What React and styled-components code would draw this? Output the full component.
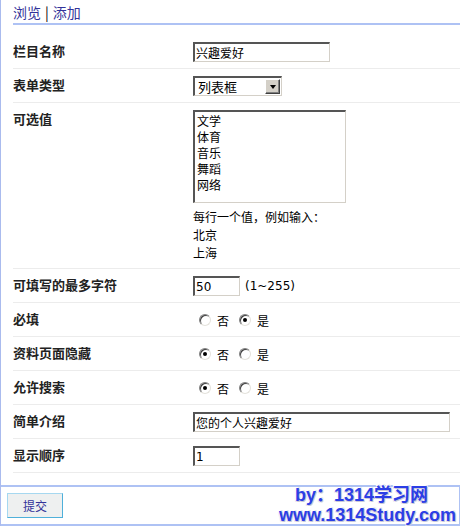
import React from "react";
import styled, { createGlobalStyle, css } from "styled-components";

const Global = createGlobalStyle`
  html, body { margin: 0; padding: 0; background: #fff; }
  body {
    font-family: "Noto Sans CJK SC", "Liberation Sans", sans-serif;
    font-size: 12px;
    color: #000;
  }
`;

const Page = styled.div`
  position: relative;
  width: 460px;
  height: 526px;
  box-sizing: border-box;
  border-left: 1px solid #aabbee;
  display: flex;
  flex-direction: column;
  overflow: hidden;
`;

const Header = styled.div`
  margin-left: 12px;
  height: 23px;
  border-bottom: 2px solid #aec2f4;
  display: flex;
  align-items: center;
  gap: 4px;
  font-size: 14px;
  line-height: 1;
  color: #000;
`;

const NavLink = styled.a`
  color: #333399;
  text-decoration: none;
  cursor: pointer;
`;

const Form = styled.div`
  margin: 10px 0 0 12px;
  display: flex;
  flex-direction: column;
`;

const Row = styled.div`
  display: grid;
  grid-template-columns: 180px 1fr;
  align-items: start;
  box-sizing: border-box;
  min-height: 34px;
  padding: 7px 0 6px;
  border-bottom: 1px solid #ececec;
`;

const Label = styled.div`
  font-weight: 700;
  font-size: 13px;
  line-height: 18px;
  color: #222;
`;

const Field = styled.div`
  display: flex;
  flex-direction: ${(p) => (p.$column ? "column" : "row")};
  align-items: ${(p) => (p.$column ? "flex-start" : "center")};
  min-height: 20px;
  gap: ${(p) => p.$gap || 0}px;
`;

const inset = css`
  box-sizing: border-box;
  border-style: solid;
  border-width: 2px 1px 1px 2px;
  border-color: #555 #d4d0c8 #d4d0c8 #555;
  background: #fff;
`;

const TextInput = styled.input`
  ${inset};
  width: ${(p) => p.$w}px;
  height: 20px;
  padding: 0 1px;
  margin: 0;
  font-family: ${(p) =>
    p.$latin ? `"DejaVu Sans", sans-serif` : `"Noto Sans CJK SC", sans-serif`};
  font-size: 12px;
  color: #000;
  outline: none;
`;

const Select = styled.div`
  ${inset};
  width: 89px;
  height: 20px;
  display: flex;
  align-items: center;
  justify-content: space-between;
  padding: 0 0 0 3px;
  font-size: 13px;
  line-height: 1;
`;

const SelectButton = styled.span`
  width: 15px;
  height: 15px;
  box-sizing: border-box;
  margin-right: 1px;
  background: #d4d0c8;
  border-style: solid;
  border-width: 1px;
  border-color: #fff #404040 #404040 #fff;
  box-shadow: inset -1px -1px 0 #808080;
  display: flex;
  align-items: center;
  justify-content: center;
`;

const Arrow = styled.span`
  width: 0;
  height: 0;
  border-left: 3.5px solid transparent;
  border-right: 3.5px solid transparent;
  border-top: 4px solid #000;
`;

const TextArea = styled.textarea`
  ${inset};
  width: 153px;
  height: 93px;
  margin: 0;
  padding: 1px 2px;
  resize: none;
  overflow: hidden;
  font-family: "Noto Sans CJK SC", sans-serif;
  font-size: 12px;
  line-height: 16px;
  color: #000;
  outline: none;
`;

const Hint = styled.div`
  margin-top: 5px;
  font-size: 12px;
  line-height: 18px;
`;

const Range = styled.span`
  font-family: "DejaVu Sans", sans-serif;
  font-size: 12px;
`;

const RadioGroup = styled.div`
  display: flex;
  align-items: center;
  height: 20px;
  padding-left: 6px;
`;

const RadioItem = styled.label`
  display: flex;
  align-items: center;
  gap: 6px;
  margin-right: 10px;
  font-size: 12px;
`;

const Radio = styled.span`
  position: relative;
  display: inline-block;
  width: 12px;
  height: 12px;
  box-sizing: border-box;
  border-radius: 50%;
  border: 1px solid;
  border-color: #808080 #e4e2dc #e4e2dc #808080;
  box-shadow: inset 1px 1px 0 #404040;
  background: #fff;
  ${(p) =>
    p.$checked &&
    css`
      &::after {
        content: "";
        position: absolute;
        left: 3px;
        top: 3px;
        width: 4px;
        height: 4px;
        border-radius: 50%;
        background: #000;
      }
    `}
`;

const Footer = styled.div`
  margin-top: auto;
  height: 41px;
  box-sizing: border-box;
  border-top: 2px solid #aec2f4;
  border-bottom: 2px solid #aec2f4;
  border-right: 1px solid #aec2f4;
  padding: 6px;
  display: flex;
  align-items: flex-start;
`;

const Button = styled.button`
  width: 56px;
  height: 25px;
  box-sizing: border-box;
  background: #eef0f0;
  border: 1px solid;
  border-color: #a6d8f0 #4fb0da #4fb0da #a6d8f0;
  color: #333399;
  font-family: "Noto Sans CJK SC", sans-serif;
  font-size: 12px;
  padding: 0;
  cursor: pointer;
`;

const Watermark = styled.div`
  position: absolute;
  right: 4px;
  bottom: 1px;
  display: flex;
  flex-direction: column;
  align-items: flex-end;
  font-family: "Liberation Sans", "Noto Sans CJK SC", sans-serif;
  font-weight: 700;
  font-size: 18px;
  line-height: 20px;
  color: #2b3ee6;
  text-shadow: 1px 1px 0 #c8c8d8, -1px -1px 0 #fff, 1px -1px 0 #e8e8f0,
    -1px 1px 0 #e8e8f0;
  pointer-events: none;
`;

const WmLine = styled.div`
  margin-right: ${(p) => p.$mr || 0}px;
  white-space: pre;
`;

function RadioPair({ value }) {
  return (
    <RadioGroup>
      <RadioItem>
        <Radio $checked={value === "no"} />否
      </RadioItem>
      <RadioItem>
        <Radio $checked={value === "yes"} />是
      </RadioItem>
    </RadioGroup>
  );
}

export default function App() {
  return (
    <>
      <Global />
      <Page>
        <Header>
          <NavLink>浏览</NavLink>
          <span>|</span>
          <NavLink>添加</NavLink>
        </Header>
        <Form>
          <Row>
            <Label>栏目名称</Label>
            <Field>
              <TextInput $w={137} defaultValue="兴趣爱好" />
            </Field>
          </Row>
          <Row>
            <Label>表单类型</Label>
            <Field>
              <Select>
                列表框
                <SelectButton>
                  <Arrow />
                </SelectButton>
              </Select>
            </Field>
          </Row>
          <Row>
            <Label>可选值</Label>
            <Field $column>
              <TextArea
                readOnly
                value={"文学\n体育\n音乐\n舞蹈\n网络"}
              />
              <Hint>
                每行一个值，例如输入：
                <br />
                北京
                <br />
                上海
              </Hint>
            </Field>
          </Row>
          <Row>
            <Label>可填写的最多字符</Label>
            <Field $gap={5}>
              <TextInput $w={47} $latin defaultValue="50" />
              <Range>(1~255)</Range>
            </Field>
          </Row>
          <Row>
            <Label>必填</Label>
            <RadioPair value="yes" />
          </Row>
          <Row>
            <Label>资料页面隐藏</Label>
            <RadioPair value="no" />
          </Row>
          <Row>
            <Label>允许搜索</Label>
            <RadioPair value="no" />
          </Row>
          <Row>
            <Label>简单介绍</Label>
            <Field>
              <TextInput $w={257} defaultValue="您的个人兴趣爱好" />
            </Field>
          </Row>
          <Row>
            <Label>显示顺序</Label>
            <Field>
              <TextInput $w={47} $latin defaultValue="1" />
            </Field>
          </Row>
        </Form>
        <Footer>
          <Button>提交</Button>
        </Footer>
        <Watermark>
          <WmLine $mr={28}>by：1314学习网</WmLine>
          <WmLine>www.1314Study.com</WmLine>
        </Watermark>
      </Page>
    </>
  );
}
